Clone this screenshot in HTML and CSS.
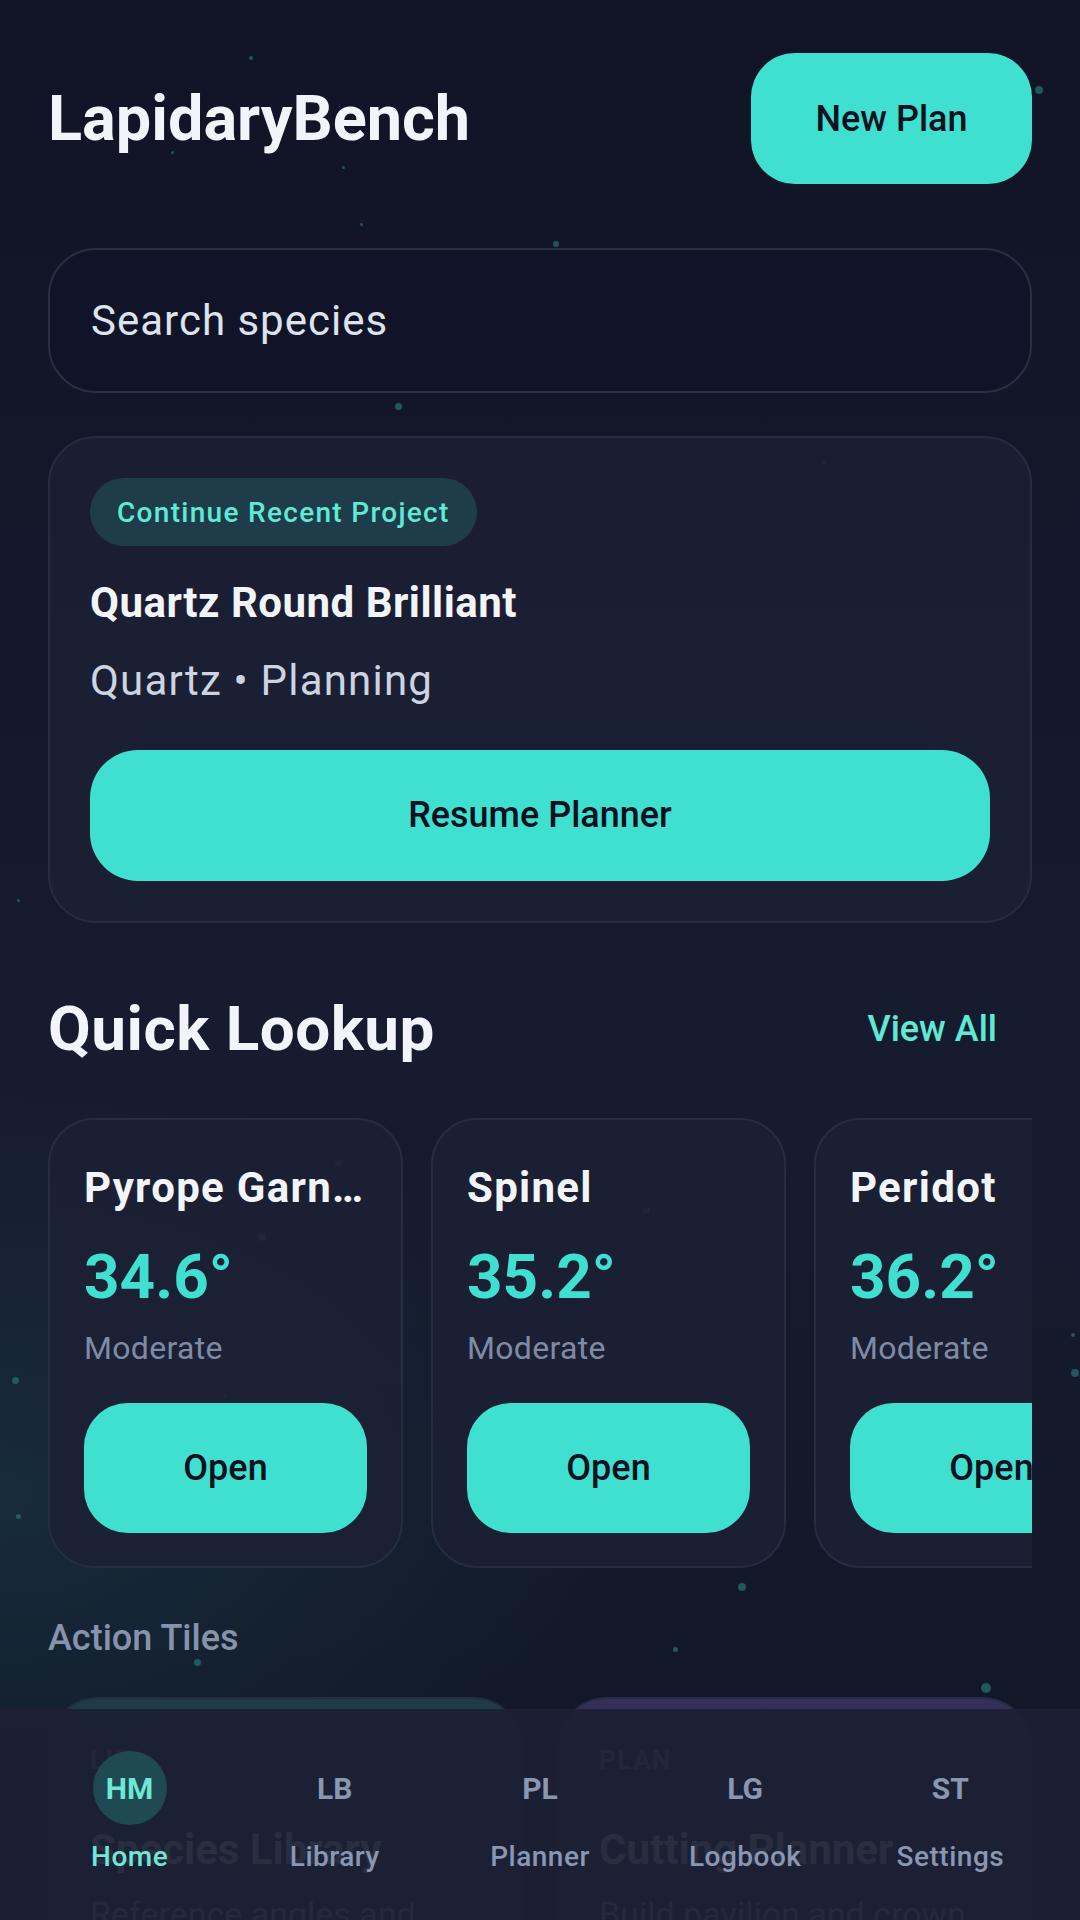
FILE: index.html
```html
<!DOCTYPE html>
<html lang="en">
<head>
    <meta charset="UTF-8">
    <meta name="viewport" content="width=device-width, initial-scale=1.0">
    <title>LapidaryBench</title>
    <link rel="stylesheet" href="styles.css">
</head>
<body>
    <!-- background sparkles -->
    <div class="sparkles">
        <span style="left:249px;top:56px;width:4px;height:4px"></span>
        <span style="left:1035px;top:86px;width:8px;height:8px"></span>
        <span style="left:171px;top:151px;width:3px;height:3px"></span>
        <span style="left:342px;top:166px;width:3px;height:3px"></span>
        <span style="left:360px;top:223px;width:3px;height:3px"></span>
        <span style="left:553px;top:241px;width:6px;height:6px"></span>
        <span style="left:395px;top:403px;width:7px;height:7px"></span>
        <span style="left:822px;top:461px;width:4px;height:4px"></span>
        <span style="left:17px;top:899px;width:3px;height:3px"></span>
        <span style="left:258px;top:1233px;width:8px;height:8px"></span>
        <span style="left:335px;top:1160px;width:7px;height:7px"></span>
        <span style="left:643px;top:1207px;width:7px;height:7px"></span>
        <span style="left:223px;top:1394px;width:4px;height:4px"></span>
        <span style="left:12px;top:1377px;width:7px;height:7px"></span>
        <span style="left:16px;top:1514px;width:5px;height:5px"></span>
        <span style="left:1071px;top:1369px;width:8px;height:8px"></span>
        <span style="left:1071px;top:1333px;width:4px;height:4px"></span>
        <span style="left:738px;top:1583px;width:8px;height:8px"></span>
        <span style="left:673px;top:1647px;width:5px;height:5px"></span>
        <span style="left:194px;top:1659px;width:7px;height:7px"></span>
        <span style="left:981px;top:1683px;width:10px;height:10px"></span>
    </div>

    <main class="screen">
        <header class="topbar">
            <h1 class="app-title">LapidaryBench</h1>
            <button class="btn btn-new">New Plan</button>
        </header>

        <input class="search" type="text" placeholder="Search species">

        <section class="panel recent">
            <span class="pill">Continue Recent Project</span>
            <h2 class="recent-title">Quartz Round Brilliant</h2>
            <p class="recent-meta">Quartz • Planning</p>
            <button class="btn btn-resume">Resume Planner</button>
        </section>

        <section class="lookup">
            <div class="section-head">
                <h2 class="section-title">Quick Lookup</h2>
                <a class="view-all" href="#">View All</a>
            </div>
            <div class="lookup-row">
                <div class="panel gem">
                    <h3 class="gem-name">Pyrope Garnet</h3>
                    <div class="gem-angle">34.6°</div>
                    <div class="gem-level">Moderate</div>
                    <button class="btn btn-open">Open</button>
                </div>
                <div class="panel gem">
                    <h3 class="gem-name">Spinel</h3>
                    <div class="gem-angle">35.2°</div>
                    <div class="gem-level">Moderate</div>
                    <button class="btn btn-open">Open</button>
                </div>
                <div class="panel gem">
                    <h3 class="gem-name">Peridot</h3>
                    <div class="gem-angle">36.2°</div>
                    <div class="gem-level">Moderate</div>
                    <button class="btn btn-open">Open</button>
                </div>
            </div>
        </section>

        <section class="actions">
            <h4 class="actions-label">Action Tiles</h4>
            <div class="tile-grid">
                <div class="tile tile-lib">
                    <div class="tile-code">LIB</div>
                    <div class="tile-title">Species Library</div>
                    <div class="tile-desc">Reference angles and refractive indices</div>
                </div>
                <div class="tile tile-plan">
                    <div class="tile-code">PLAN</div>
                    <div class="tile-title">Cutting Planner</div>
                    <div class="tile-desc">Build pavilion and crown sequences</div>
                </div>
            </div>
        </section>
    </main>

    <nav class="tabbar">
        <a class="tab active" href="#"><span class="tab-icon">HM</span><span class="tab-label">Home</span></a>
        <a class="tab" href="#"><span class="tab-icon">LB</span><span class="tab-label">Library</span></a>
        <a class="tab" href="#"><span class="tab-icon">PL</span><span class="tab-label">Planner</span></a>
        <a class="tab" href="#"><span class="tab-icon">LG</span><span class="tab-label">Logbook</span></a>
        <a class="tab" href="#"><span class="tab-icon">ST</span><span class="tab-label">Settings</span></a>
    </nav>
</body>
</html>
```

FILE: styles.css
```css
* {
    box-sizing: border-box;
}
html, body {
    margin: 0;
    padding: 0;
}
body {
    width: 1080px;
    height: 1920px;
    overflow: hidden;
    position: relative;
    font-family: Roboto, "Noto Sans", Arial, sans-serif;
    color: #f1f5f9;
    background:
        radial-gradient(ellipse 900px 600px at 0% 78%, rgba(32, 78, 88, 0.35), transparent 70%),
        linear-gradient(180deg, #111326 0%, #15182c 35%, #171b30 55%, #13192b 78%, #0f1626 100%);
}
h1, h2, h3, h4, p {
    margin: 0;
}

/* sparkles */
.sparkles {
    position: absolute;
    inset: 0;
    z-index: 0;
    pointer-events: none;
}
.sparkles span {
    position: absolute;
    border-radius: 50%;
    background-color: rgba(38, 110, 112, 0.75);
}

.screen {
    position: relative;
    z-index: 1;
    padding: 53px 48px 0 48px;
}

/* buttons */
.btn {
    border: none;
    background-color: #40e0d0;
    color: #0b1120;
    font-family: inherit;
    font-weight: 500;
    font-size: 36px;
    cursor: pointer;
}

/* header */
.topbar {
    display: flex;
    align-items: center;
    justify-content: space-between;
}
.app-title {
    font-size: 63px;
    font-weight: 700;
    line-height: 1.2;
    color: #f1f5f9;
}
.btn-new {
    width: 281px;
    height: 131px;
    border-radius: 44px;
}

/* search */
.search {
    display: block;
    width: 100%;
    height: 145px;
    margin-top: 64px;
    padding: 0 41px;
    border: 2px solid #283046;
    border-radius: 48px;
    background-color: rgba(17, 19, 40, 0.6);
    color: #e2e8f0;
    font-family: inherit;
    font-size: 42px;
    letter-spacing: 1px;
    outline: none;
}
.search::placeholder {
    color: #dde3ec;
}

/* panels */
.panel {
    background-color: rgba(28, 32, 52, 0.88);
    border: 2px solid #262c42;
    border-radius: 48px;
}
.recent {
    margin-top: 43px;
    padding: 40px;
    display: flex;
    flex-direction: column;
    align-items: flex-start;
}
.pill {
    display: inline-flex;
    align-items: center;
    height: 68px;
    padding: 0 27px;
    border-radius: 34px;
    background-color: #1f3c4b;
    color: #5eead4;
    font-size: 28px;
    font-weight: 500;
    letter-spacing: 1.3px;
}
.recent-title {
    margin-top: 32px;
    font-size: 42px;
    font-weight: 700;
    line-height: 1.2;
    letter-spacing: 0.5px;
    color: #f1f5f9;
}
.recent-meta {
    margin-top: 28px;
    font-size: 42px;
    line-height: 1.2;
    color: #cdd4e1;
    letter-spacing: 1.2px;
}
.btn-resume {
    margin-top: 43px;
    width: 100%;
    height: 131px;
    border-radius: 48px;
}

/* quick lookup */
.lookup {
    margin-top: 69px;
}
.section-head {
    display: flex;
    align-items: center;
    justify-content: space-between;
}
.section-title {
    font-size: 62px;
    font-weight: 700;
    line-height: 1.2;
    letter-spacing: 0.5px;
    color: #f1f5f9;
}
.view-all {
    padding: 0 35px;
    color: #5eead4;
    font-size: 36px;
    font-weight: 500;
    text-decoration: none;
}
.lookup-row {
    margin-top: 52px;
    display: flex;
    gap: 28px;
    overflow: hidden;
}
.gem {
    flex: 0 0 355px;
    min-width: 0;
    height: 450px;
    padding: 43px 34px 33px 34px;
    border-radius: 46px;
    display: flex;
    flex-direction: column;
}
.gem-name {
    min-width: 0;
    font-size: 42px;
    font-weight: 700;
    line-height: 1.2;
    letter-spacing: 1.3px;
    color: #f1f5f9;
    white-space: nowrap;
    overflow: hidden;
    text-overflow: ellipsis;
}
.gem-angle {
    margin-top: 27px;
    font-size: 62px;
    font-weight: 700;
    line-height: 1.2;
    color: #40e0d0;
}
.gem-level {
    margin-top: 14px;
    font-size: 32px;
    line-height: 1.2;
    letter-spacing: 0.3px;
    color: #7f8ba5;
}
.btn-open {
    margin-top: 36px;
    width: 100%;
    height: 130px;
    border-radius: 44px;
    flex-shrink: 0;
}

/* action tiles */
.actions {
    margin-top: 49px;
}
.actions-label {
    font-size: 36px;
    font-weight: 500;
    line-height: 1.2;
    color: #8793ad;
}
.tile-grid {
    margin-top: 37px;
    display: grid;
    grid-template-columns: 1fr 1fr;
    gap: 34px;
}
.tile {
    height: 420px;
    padding: 46px 40px 40px 40px;
    border: 2px solid #262c42;
    border-radius: 50px;
}
.tile-lib {
    background: linear-gradient(180deg, #1f3b4a 0%, #1c2536 30%, #1b1f33 100%);
}
.tile-plan {
    background: linear-gradient(180deg, #35305b 0%, #24233f 30%, #1b1f33 100%);
}
.tile-code {
    font-size: 26px;
    font-weight: 700;
    line-height: 1.2;
    letter-spacing: 1.5px;
    color: #8793ad;
}
.tile-title {
    margin-top: 48px;
    font-size: 42px;
    font-weight: 700;
    line-height: 1.2;
    color: #f1f5f9;
}
.tile-desc {
    margin-top: 19px;
    font-size: 34px;
    line-height: 1.2;
    color: #aab4c6;
}

/* bottom navigation */
.tabbar {
    position: absolute;
    left: 0;
    right: 0;
    bottom: 0;
    z-index: 5;
    height: 211px;
    padding: 42px 27px 0 27px;
    display: grid;
    grid-template-columns: repeat(5, 1fr);
    background-color: rgba(28, 32, 52, 0.94);
}
.tab {
    display: flex;
    flex-direction: column;
    align-items: center;
    text-decoration: none;
    color: #8a97b0;
}
.tab-icon {
    width: 74px;
    height: 74px;
    border-radius: 50%;
    display: flex;
    align-items: center;
    justify-content: center;
    font-size: 30px;
    font-weight: 700;
}
.tab-label {
    margin-top: 15px;
    font-size: 28px;
    font-weight: 500;
    line-height: 1.2;
    letter-spacing: 0.5px;
}
.tab.active {
    color: #6ee7d6;
}
.tab.active .tab-icon {
    background-color: #1f4a53;
}
```
